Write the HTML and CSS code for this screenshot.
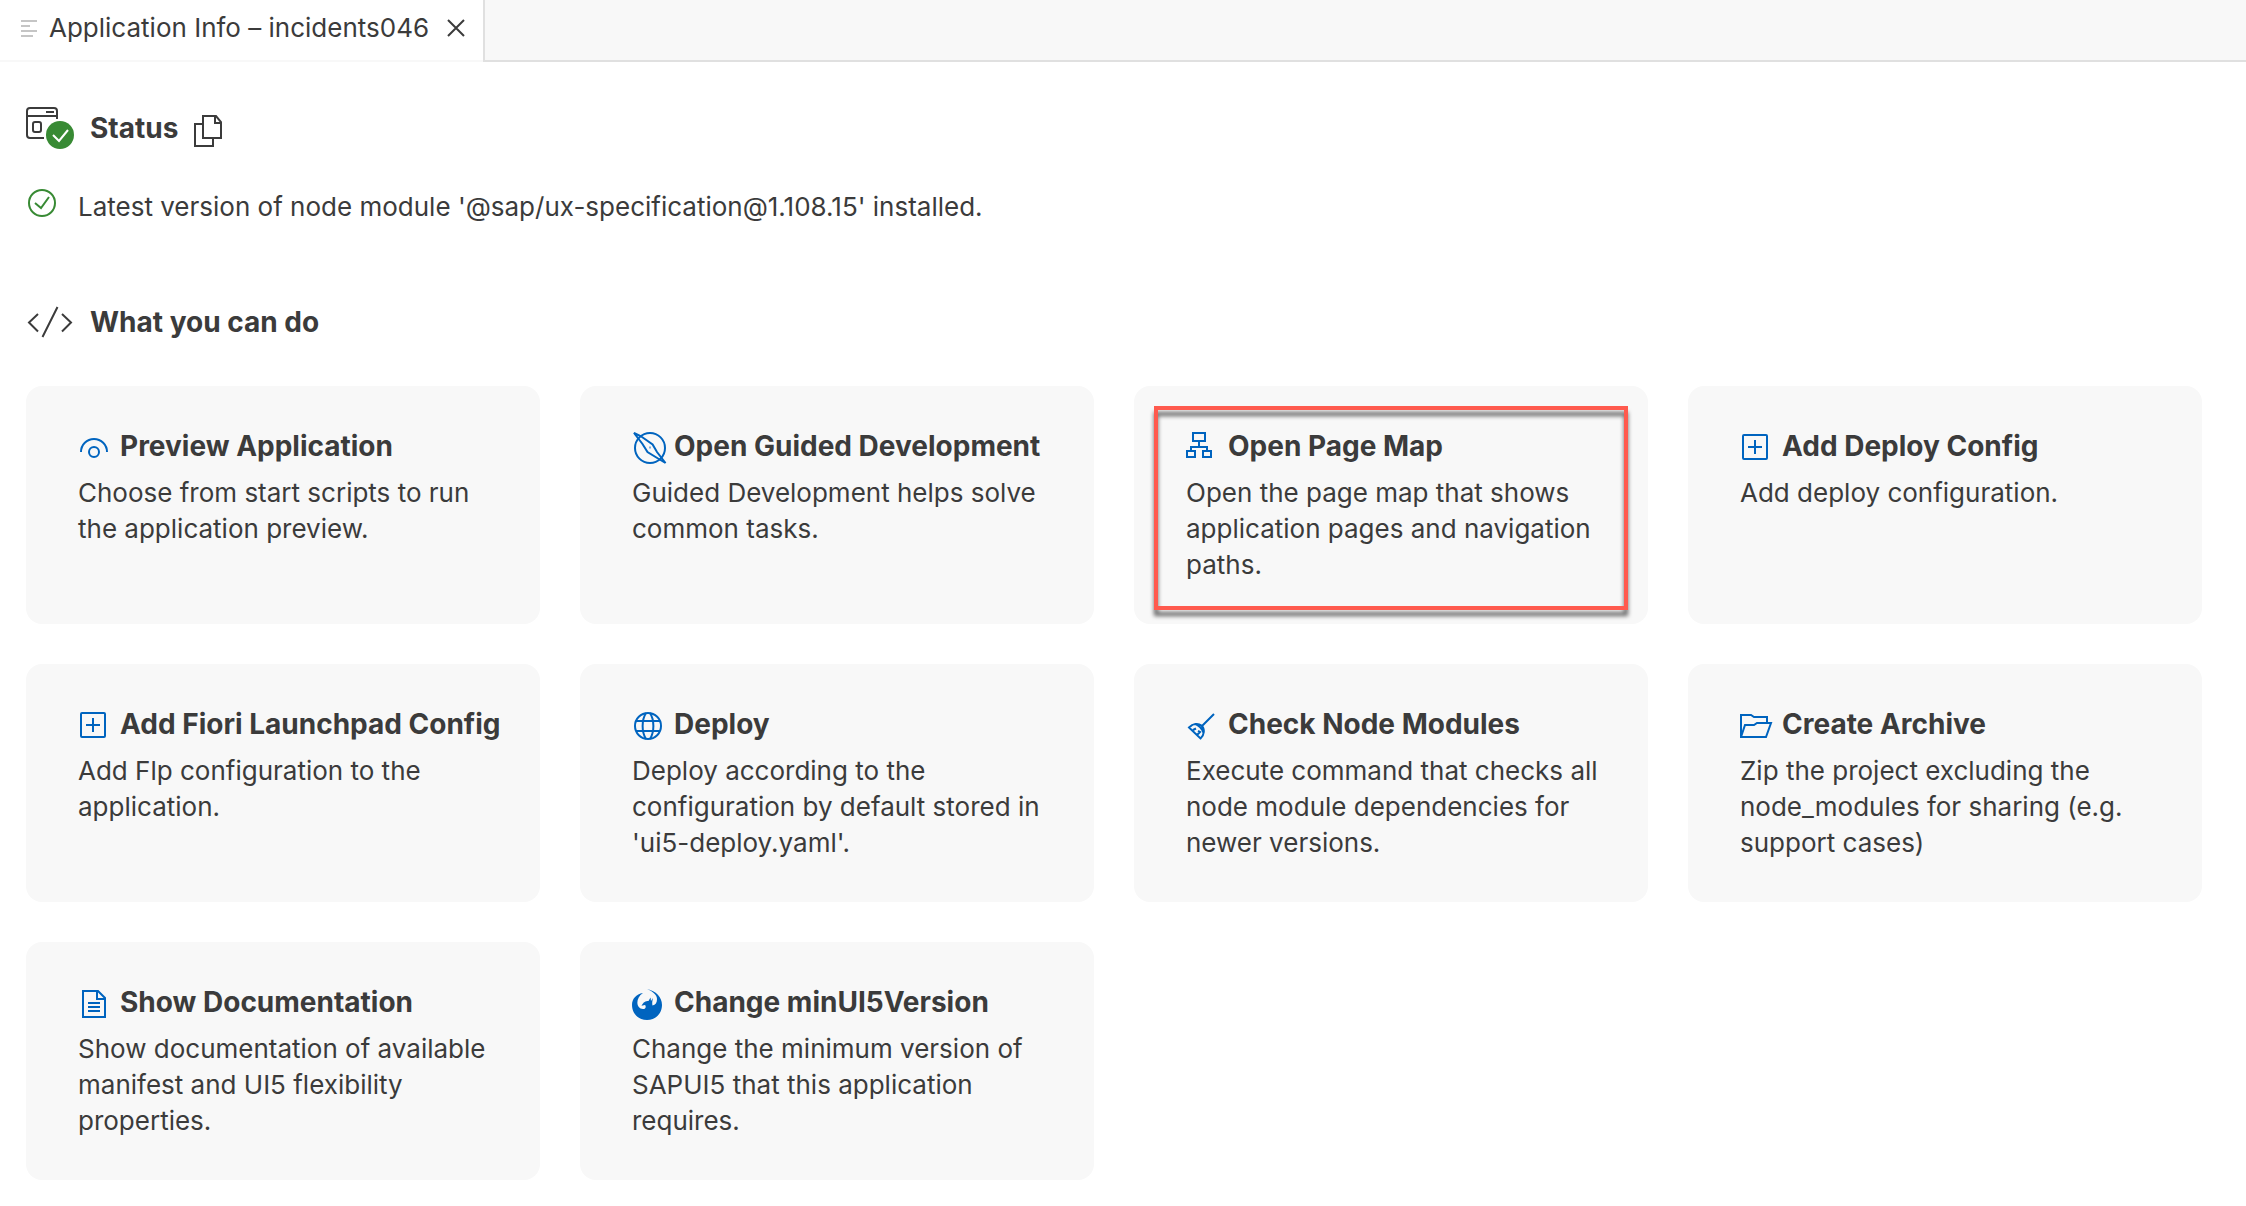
FILE: index.html
```html
<!DOCTYPE html>
<html lang="en">
<head>
<meta charset="utf-8">
<meta name="viewport" content="width=device-width, initial-scale=1">
<title>Application Info – incidents046</title>
<link rel="stylesheet" href="styles.css">
</head>
<body>
<header class="tabs">
  <div class="tab">
    <svg class="tab-icon" viewBox="0 0 16 18"><path d="M0 2h16M0 7h9M0 12h16M0 17h12"/></svg>
    <span class="tab-title">Application Info – incidents046</span>
    <button class="tab-close" type="button" aria-label="Close tab"><svg viewBox="0 0 18 18"><path d="M1 1l16 16M17 1L1 17"/></svg></button>
  </div>
</header>

<main class="page">
  <section class="status">
    <div class="heading">
      <svg class="heading-icon" viewBox="0 0 48 42"><path d="M18 31H4a3 3 0 0 1-3-3V4a3 3 0 0 1 3-3h24a3 3 0 0 1 3 3v8M1 9h30M20 5h8"/><rect x="7" y="15" width="8" height="10" rx="2"/><circle class="ok-fill" cx="34" cy="28" r="14"/><path class="ok-tick" d="M27 28l6 6 9-11"/></svg>
      <h2>Status</h2>
      <button class="copy" type="button" aria-label="Copy status"><svg viewBox="0 0 28 32"><path d="M9 1h13l5 6v16H9zM21 1v7h6M9 9H1v22h18v-8"/></svg></button>
    </div>
    <p class="message">
      <svg class="message-icon" viewBox="0 0 28 28"><circle cx="14" cy="14" r="13"/><path d="M7 14l6 5 8-11"/></svg>
      <span>Latest version of node module '@sap/ux-specification@1.108.15' installed.</span>
    </p>
  </section>

  <section class="actions">
    <div class="heading">
      <svg class="heading-icon" viewBox="0 0 48 42"><path d="M12 13L3 21.500l9 9M31.500 6l-15 30M36 13l9 8.500-9 9"/></svg>
      <h2>What you can do</h2>
    </div>
    <div class="cards">
      <button class="card" type="button">
        <span class="card-title"><svg viewBox="0 0 36 32"><path d="M3 20a13 13 0 0 1 26 0"/><circle cx="16" cy="20" r="5"/></svg>Preview Application</span>
        <span class="card-text">Choose from start scripts to run the application preview.</span>
      </button>
      <button class="card" type="button">
        <span class="card-title"><svg viewBox="0 0 36 32"><circle cx="18" cy="16" r="15"/><path d="M2 1L8.600 4l12 8.500L25 20l8.500 11-5-3-13-8-5-8zM17.500 15.500h1"/></svg>Open Guided Development</span>
        <span class="card-text">Guided Development helps solve common tasks.</span>
      </button>
      <button class="card card-marked" type="button">
        <span class="card-title"><svg viewBox="0 0 36 32"><path d="M7 1h12v8H7zM1 19h8v6H1zM17 19h8v6h-8zM13 9v6M5 19v-4h16v4"/></svg>Open Page Map</span>
        <span class="card-text">Open the page map that shows application pages and navigation paths.</span>
      </button>
      <button class="card" type="button">
        <span class="card-title"><svg viewBox="0 0 36 32"><rect x="3" y="3" width="24" height="24" rx="1"/><path d="M15 8v14M8 15h14"/></svg>Add Deploy Config</span>
        <span class="card-text">Add deploy configuration.</span>
      </button>
      <button class="card" type="button">
        <span class="card-title"><svg viewBox="0 0 36 32"><rect x="3" y="3" width="24" height="24" rx="1"/><path d="M15 8v14M8 15h14"/></svg>Add Fiori Launchpad Config</span>
        <span class="card-text">Add Flp configuration to the application.</span>
      </button>
      <button class="card" type="button">
        <span class="card-title"><svg viewBox="0 0 36 32"><circle cx="16" cy="16" r="13"/><path d="M4 11h24M4 21h24M14 3C9.500 10 9.500 22 14 29M18 3c4.500 7 4.500 19 0 26"/></svg>Deploy</span>
        <span class="card-text">Deploy according to the configuration by default stored in 'ui5-deploy.yaml'.</span>
      </button>
      <button class="card" type="button">
        <span class="card-title"><svg viewBox="0 0 36 32"><path d="M28 4L16.500 15.500M3 17.500C7 13.500 12 13 15.500 15.500 19 19 18.500 25 14.500 28.500zM9.500 14c3 1 7 5 8 9M7 20l3-1.500M11 25l3-3-2-1"/></svg>Check Node Modules</span>
        <span class="card-text">Execute command that checks all node module dependencies for newer versions.</span>
      </button>
      <button class="card" type="button">
        <span class="card-title"><svg viewBox="0 0 36 32"><path d="M27 13V7H14l-3-2H1v22M1 27l4-12h9l3-2h14l-5 14z"/></svg>Create Archive</span>
        <span class="card-text">Zip the project excluding the node_modules for sharing (e.g. support cases)</span>
      </button>
      <button class="card" type="button">
        <span class="card-title"><svg viewBox="0 0 36 32"><path d="M5 3h15l7 7v19H5zM19 3v8h8M10 15h12M10 19h12M10 23h12"/></svg>Show Documentation</span>
        <span class="card-text">Show documentation of available manifest and UI5 flexibility properties.</span>
      </button>
      <button class="card" type="button">
        <span class="card-title"><svg viewBox="0 0 36 32"><path class="solid" d="M11 5C4 6 0 11 0 17c0 8.500 6.500 15 15 15s15-6.500 15-15C30 9 24 3 15 1c6 2.500 10 6 10 10 0 3.500-1.500 6-4.500 6.500-.5-2-.3-4 .5-7.500l-2 3-.5-3.500-2 3.500c-3 0-5 1-7 4.800l3.500-.8c1.500 1.500.5 4-2 4C4 21 3 10 11 5z"/></svg>Change minUI5Version</span>
        <span class="card-text">Change the minimum version of SAPUI5 that this application requires.</span>
      </button>
    </div>
  </section>
</main>
</body>
</html>
```

FILE: styles.css
```css
* { box-sizing: border-box; }

body {
  margin: 0;
  background: #fff;
  color: #3b3b3b;
  font: 26px/36px Inter, "Liberation Sans", sans-serif;
}

button {
  padding: 0;
  border: 0;
  background: none;
  color: inherit;
  font: inherit;
  text-align: left;
  cursor: pointer;
}

svg {
  display: block;
  flex: none;
  fill: none;
  stroke: currentColor;
  stroke-width: 2;
}

.tabs {
  display: flex;
  height: 62px;
  background: #f8f8f8;
  box-shadow: inset 0 -2px #e0e0e0;
}

.tab {
  display: flex;
  align-items: center;
  padding: 0 18px 6px 21px;
  background: #fff;
  border-right: 2px solid #e0e0e0;
  box-shadow: inset 0 -2px #f8f8f8;
}

.tab-icon {
  width: 16px;
  height: 18px;
  margin-right: 12px;
  color: #c5c5c5;
}

.tab-close { margin-left: 18px; }

.tab-close svg { width: 18px; height: 18px; }

.page { padding: 45px 44px 26px 26px; }

.heading {
  display: flex;
  align-items: center;
  height: 42px;
}

.heading-icon {
  width: 48px;
  height: 42px;
  margin-right: 16px;
}

h2 {
  margin: 0;
  font-size: 28px;
  line-height: 40px;
  font-weight: 700;
}

.ok-fill { fill: #388a34; stroke: #fff; stroke-width: 4; paint-order: stroke; }

.ok-tick { stroke: #fff; }

.copy { margin: 6px 0 0 16px; }

.copy svg { width: 28px; height: 32px; }

.message {
  display: flex;
  gap: 22px;
  margin: 40px 0 76px;
  padding-left: 2px;
}

.message-icon {
  width: 28px;
  height: 28px;
  color: #388a34;
}

.cards {
  display: grid;
  grid-template-columns: repeat(4, minmax(0, 1fr));
  grid-auto-rows: minmax(238px, auto);
  gap: 40px;
  margin-top: 43px;
}

.card {
  position: relative;
  display: flex;
  flex-direction: column;
  gap: 11px;
  padding: 42px 32px 32px 52px;
  border-radius: 16px;
  background: #f8f8f8;
}

.card-title {
  display: flex;
  align-items: flex-end;
  gap: 6px;
  font-size: 28px;
  font-weight: 700;
  white-space: nowrap;
}

.card-title svg {
  width: 36px;
  height: 32px;
  color: #0064bf;
}

.solid { fill: currentColor; stroke: none; }

.card-text { padding-right: 12px; }

.card-marked::after {
  content: "";
  position: absolute;
  inset: 20px 20px 14px;
  border: 4px solid #ff5a4e;
  filter: drop-shadow(0 6px 2px rgba(0, 0, 0, 0.6));
}
```
